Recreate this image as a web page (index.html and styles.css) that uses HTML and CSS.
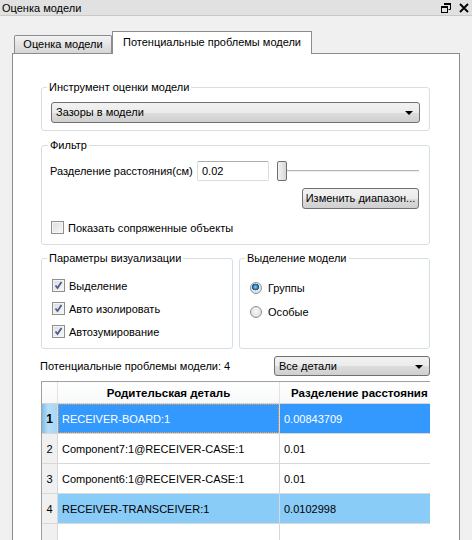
FILE: index.html
```html
<!DOCTYPE html>
<html lang="ru">
<head>
  <meta charset="UTF-8" />
  <title>Оценка модели</title>
  <link rel="stylesheet" href="styles.css">
</head>
<body>
  <div class="titlebar">
    <span class="title">Оценка модели</span>
    <span class="title-icons">
      <svg width="10" height="10" viewBox="0 0 10 10">
        <path d="M3.5 0.5h6v6h-2" fill="none" stroke="#000" stroke-width="1"/>
        <rect x="3" y="0" width="7" height="2" fill="#000"/>
        <rect x="0.5" y="3.5" width="6" height="6" fill="none" stroke="#000" stroke-width="1"/>
        <rect x="0" y="3" width="7" height="2" fill="#000"/>
      </svg>
      <svg width="10" height="10" viewBox="0 0 10 10">
        <path d="M1 1L9 9M9 1L1 9" stroke="#000" stroke-width="1.8"/>
      </svg>
    </span>
  </div>

  <div class="dock">
    <div class="tabs">
      <div class="tab">Оценка модели</div>
      <div class="tab active">Потенциальные проблемы модели</div>
    </div>

    <div class="pane">
      <fieldset class="group">
        <legend>Инструмент оценки модели</legend>
        <div class="combo">Зазоры в модели<span class="arrow"></span></div>
      </fieldset>

      <fieldset class="group filter">
        <legend>Фильтр</legend>
        <div class="filter-row">
          <span class="filter-label">Разделение расстояния(см)</span>
          <div class="input">0.02</div>
          <div class="slider">
            <div class="handle"></div>
            <div class="groove"></div>
          </div>
        </div>
        <div class="btn-row">
          <div class="button">Изменить диапазон...</div>
        </div>
        <div class="check-row">
          <span class="check"></span>
          <span>Показать сопряженные объекты</span>
        </div>
      </fieldset>

      <div class="group-pair">
        <fieldset class="group opts">
          <legend>Параметры визуализации</legend>
          <div class="check-row"><span class="check on"></span><span>Выделение</span></div>
          <div class="check-row"><span class="check on"></span><span>Авто изолировать</span></div>
          <div class="check-row"><span class="check on"></span><span>Автозумирование</span></div>
        </fieldset>
        <fieldset class="group opts radios">
          <legend>Выделение модели</legend>
          <div class="radio-row"><span class="radio on"></span><span>Группы</span></div>
          <div class="radio-row"><span class="radio"></span><span>Особые</span></div>
        </fieldset>
      </div>

      <div class="issues-row">
        <span>Потенциальные проблемы модели: 4</span>
        <div class="combo small">Все детали<span class="arrow"></span></div>
      </div>

      <div class="grid">
        <table>
          <thead>
            <tr>
              <th class="rowhead"></th>
              <th class="col1">Родительская деталь</th>
              <th class="col2">Разделение расстояния</th>
            </tr>
          </thead>
          <tbody>
            <tr class="selected">
              <td class="rowhead current">1</td>
              <td class="col1"><span class="focus">RECEIVER-BOARD:1</span></td>
              <td class="col2">0.00843709</td>
            </tr>
            <tr>
              <td class="rowhead">2</td>
              <td class="col1">Component7:1@RECEIVER-CASE:1</td>
              <td class="col2">0.01</td>
            </tr>
            <tr>
              <td class="rowhead">3</td>
              <td class="col1">Component6:1@RECEIVER-CASE:1</td>
              <td class="col2">0.01</td>
            </tr>
            <tr class="marked">
              <td class="rowhead">4</td>
              <td class="col1">RECEIVER-TRANSCEIVER:1</td>
              <td class="col2">0.0102998</td>
            </tr>
            <tr class="empty">
              <td class="rowhead"></td>
              <td class="col1"></td>
              <td class="col2"></td>
            </tr>
          </tbody>
        </table>
      </div>
    </div>
  </div>
</body>
</html>
```

FILE: styles.css
```css
html, body {
  margin: 0;
  height: 540px;
  overflow: hidden;
}
body {
  font-family: 'Liberation Sans', Arial, sans-serif;
  font-size: 11px;
  color: #000;
  background: #f0f0f0;
}
.titlebar {
  height: 15px;
  background: #e1e1e1;
  border-bottom: 1px solid #c9c9c9;
  display: flex;
  align-items: center;
  justify-content: space-between;
  padding: 0 3px 0 2px;
}
.title-icons {
  display: flex;
  gap: 8px;
  align-items: center;
}
.title-icons svg {
  display: block;
}
.dock {
  padding: 15px 12px 0 12px;
}
.tabs {
  display: flex;
  align-items: flex-end;
  padding-left: 2px;
  margin-bottom: -1px;
}
.tab {
  width: 96px;
  height: 17px;
  line-height: 17px;
  margin-bottom: 1px;
  text-align: center;
  border: 1px solid #898c95;
  border-bottom: none;
  background: linear-gradient(#f3f3f3, #e4e4e4 50%, #d6d6d6);
  border-radius: 2px 2px 0 0;
}
.tab.active {
  position: relative;
  width: 198px;
  height: 22px;
  line-height: 21px;
  margin-bottom: 0;
  background: #fff;
  border-radius: 0;
}
.pane {
  background: #fff;
  border: 1px solid #898c95;
  height: 600px;
  padding: 27px 29px 0 28px;
}
.group {
  margin: 0;
  border: 1px solid #d5dfe5;
  border-radius: 3px;
  padding: 9px 9px 7px 9px;
}
.group legend {
  padding: 0 2px;
  margin-left: -4px;
  line-height: 12px;
}
.combo {
  position: relative;
  height: 19px;
  line-height: 19px;
  padding-left: 4px;
  border: 1px solid #707070;
  border-radius: 3px;
  background: linear-gradient(#f2f2f2, #ebebeb 50%, #dddddd 51%, #cfcfcf);
}
.arrow {
  position: absolute;
  right: 6px;
  top: 8px;
  border-left: 4px solid transparent;
  border-right: 4px solid transparent;
  border-top: 4px solid #000;
}
.filter {
  margin-top: 8px;
  padding: 10px 9px 10px 8px;
}
.filter legend {
  margin-left: -2px;
}
.filter-row {
  display: flex;
  align-items: center;
  height: 20px;
}
.filter-label {
  width: 147px;
}
.input {
  width: 66px;
  height: 18px;
  line-height: 18px;
  padding-left: 4px;
  border: 1px solid #dadce0;
  border-top-color: #abadb3;
  border-radius: 2px;
}
.slider {
  flex: 1;
  display: flex;
  align-items: center;
  margin-left: 8px;
  margin-right: 1px;
}
.handle {
  width: 8px;
  height: 18px;
  border: 1px solid #707070;
  border-radius: 2px;
  background: linear-gradient(90deg, #f2f2f2, #e6e6e6 50%, #d6d6d6);
}
.groove {
  flex: 1;
  height: 1px;
  border-top: 1px solid #b8b8b8;
  background: #ececec;
  margin-top: -1px;
}
.btn-row {
  display: flex;
  justify-content: flex-end;
  margin-top: 7px;
  padding-right: 1px;
}
.button {
  width: 115px;
  height: 19px;
  line-height: 19px;
  text-align: center;
  border: 1px solid #707070;
  border-radius: 3px;
  background: linear-gradient(#f2f2f2, #ebebeb 50%, #dddddd 51%, #cfcfcf);
}
.check-row {
  display: flex;
  align-items: center;
  gap: 4px;
  height: 13px;
  margin-top: 12px;
  padding-left: 1px;
}
.check {
  width: 11px;
  height: 11px;
  border: 1px solid #8e8f8f;
  background: linear-gradient(135deg, #dcdcdc, #f8f8f8);
  box-shadow: inset 0 0 0 1px #f4f4f4;
}
.check.on {
  background:
    url("data:image/svg+xml;utf8,<svg xmlns='http://www.w3.org/2000/svg' width='11' height='11'><path d='M2.5 5.5L4.5 8L8.5 2' fill='none' stroke='%234a5d94' stroke-width='1.8'/></svg>") no-repeat center,
    linear-gradient(135deg, #dcdcdc, #f8f8f8);
}
.group-pair {
  display: grid;
  grid-template-columns: 192px 1fr;
  gap: 6px;
  margin-top: 7px;
}
.opts {
  padding: 2px 9px 10px 9px;
}
.opts .check-row {
  margin-top: 10px;
}
.opts .check-row:first-of-type {
  margin-top: 13px;
}
.radio-row {
  display: flex;
  align-items: center;
  gap: 6px;
  height: 13px;
  margin-top: 11px;
  padding-left: 1px;
}
.radio-row:first-of-type {
  margin-top: 15px;
}
.radio {
  width: 10px;
  height: 10px;
  border: 1px solid #8e8f8f;
  border-radius: 50%;
  background: radial-gradient(circle at 50% 40%, #f8f8f8, #d8d8d8);
}
.radio.on {
  background:
    radial-gradient(circle at 45% 40%, #8fd3ff 0, #2a7fc0 2.2px, #134a7a 3.3px, transparent 3.6px),
    radial-gradient(circle at 50% 40%, #f8f8f8, #d8d8d8);
}
.issues-row {
  display: flex;
  align-items: center;
  justify-content: space-between;
  margin-top: 7px;
  margin-left: -1px;
}
.combo.small {
  width: 150px;
  height: 18px;
  line-height: 18px;
}
.grid {
  margin-top: 5px;
  height: 200px;
  overflow: hidden;
  border: 1px solid #a0a0a0;
  border-right: none;
}
.grid table {
  border-collapse: collapse;
  table-layout: fixed;
  width: 420px;
}
.grid th {
  height: 21px;
  font-weight: bold;
  font-size: 11.5px;
  background: linear-gradient(#ffffff, #f7f8fa);
  border-bottom: 1px solid #d5d5d5;
  border-right: 1px solid #e3e3e3;
  text-align: center;
  padding: 0;
  white-space: nowrap;
  overflow: hidden;
}
.grid th.col2 {
  text-align: left;
  padding-left: 11px;
}
.grid td {
  height: 29px;
  padding: 0 0 0 4px;
  border-bottom: 1px solid #d8d8d8;
  border-right: 1px solid #d8d8d8;
  white-space: nowrap;
  overflow: hidden;
}
.rowhead {
  width: 15px;
}
.grid td.rowhead {
  padding: 0;
  text-align: center;
  background: #f0f0f0;
  border-right: 1px solid #d8d8d8;
}
.col1 {
  width: 221px;
}
.col2 {
  width: 183px;
}
.grid tr.selected td {
  background: #3399ff;
  color: #fff;
}
.grid tr.selected td.rowhead {
  background: linear-gradient(90deg, #7dbde8, #b5ddf7 40%, #a7d6f5);
  color: #000;
  font-weight: bold;
  font-size: 12px;
}
.grid tr.selected td.col1 {
  padding: 0;
}
.focus {
  display: flex;
  align-items: center;
  height: 27px;
  padding-left: 3px;
  border: 1px dotted #f59a3a;
}
.grid tr.marked td {
  background: #8accf8;
}
.grid tr.marked td.rowhead {
  background: #f0f0f0;
}
.grid tr.empty td {
  height: 200px;
  border-bottom: none;
  background: #fff;
}
.grid tr.empty td.rowhead {
  background: #f0f0f0;
}
```
